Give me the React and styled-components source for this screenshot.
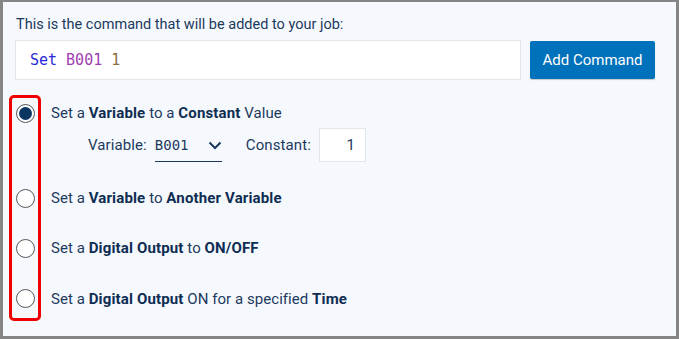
import React from "react";
import styled, { createGlobalStyle } from "styled-components";

const Global = createGlobalStyle`
  html, body { margin: 0; padding: 0; }
  body { font-family: Roboto, "Liberation Sans", sans-serif; }
  * { box-sizing: border-box; }
`;

const Frame = styled.div`
  width: 679px;
  height: 339px;
  border-style: solid;
  border-color: #858585;
  border-width: 2px 3px 3px 3px;
  background: #f5f9fd;
  padding: 14px 21px 0 12px;
  color: #1d3a5e;
`;

const Intro = styled.div`
  font-size: 14.5px;
  line-height: 18px;
  margin-left: 1px;
  margin-bottom: 6px;
`;

const CommandRow = styled.div`
  display: flex;
  align-items: center;
  gap: 9px;
`;

const CodeBox = styled.div`
  flex: 1;
  height: 40px;
  background: #fff;
  border: 1px solid #e3e6ea;
  display: flex;
  align-items: center;
  padding-left: 14px;
  font-family: "DejaVu Sans Mono", "Liberation Mono", monospace;
  font-size: 15px;
`;

const Tok = styled.span`
  color: ${(p) => p.$c};
  margin-right: 9px;
`;

const Button = styled.button`
  width: 125px;
  height: 38px;
  border: none;
  border-radius: 2px;
  background: #0071bb;
  color: #fff;
  font-family: Roboto, "Liberation Sans", sans-serif;
  font-size: 15px;
  box-shadow: 0 1px 1px rgba(0, 0, 0, 0.2);
`;

const Options = styled.div`
  position: relative;
  margin-top: 15px;
  display: flex;
  flex-direction: column;
`;

const Highlight = styled.div`
  position: absolute;
  left: -6px;
  top: 0;
  width: 32px;
  height: 226px;
  border: 3px solid #ee0000;
  border-radius: 5px;
  pointer-events: none;
`;

const Option = styled.label`
  display: flex;
  align-items: center;
  height: ${(p) => p.$h}px;
  font-size: 15px;
  letter-spacing: 0.05px;
  gap: 16px;
  padding-left: 1px;
`;

const Radio = styled.span`
  width: 19px;
  height: 19px;
  border-radius: 50%;
  border: 1.5px solid #555;
  background: #fff;
  display: flex;
  align-items: center;
  justify-content: center;
  flex: none;
  &::after {
    content: "";
    width: 13px;
    height: 13px;
    border-radius: 50%;
    background: #0a3560;
    display: ${(p) => (p.$on ? "block" : "none")};
  }
`;

const B = styled.b`
  font-weight: 700;
  color: #0f2d52;
  letter-spacing: 0.15px;
`;

const SubRow = styled.div`
  display: flex;
  align-items: center;
  height: 34px;
  margin-top: -3px;
  margin-bottom: 11px;
  padding-left: 73px;
  font-size: 15px;
  letter-spacing: 0.1px;
`;

const SubLabel = styled.span`
  margin-right: 8px;
`;

const Select = styled.div`
  width: 67px;
  height: 34px;
  border-bottom: 1px solid #1d3a5e;
  display: flex;
  align-items: center;
  justify-content: space-between;
  font-family: "DejaVu Sans Mono", "Liberation Mono", monospace;
  font-size: 14px;
  letter-spacing: 0;
  margin-right: 24px;
  padding-top: 1px;
`;

const NumBox = styled.div`
  width: 47px;
  height: 34px;
  background: #fff;
  border: 1px solid #e3e6ea;
  display: flex;
  align-items: center;
  justify-content: flex-end;
  padding-right: 10px;
  font-size: 15px;
  margin-left: 8px;
`;

export default function App() {
  return (
    <>
      <Global />
      <Frame>
        <Intro>This is the command that will be added to your job:</Intro>
        <CommandRow>
          <CodeBox>
            <Tok $c="#2a2ad6">Set</Tok>
            <Tok $c="#a23fb3">B001</Tok>
            <Tok $c="#8b6b3c">1</Tok>
          </CodeBox>
          <Button>Add Command</Button>
        </CommandRow>
        <Options>
          <Highlight />
          <Option $h={36}>
            <Radio $on />
            <span>
              Set a <B>Variable</B> to a <B>Constant</B> Value
            </span>
          </Option>
          <SubRow>
            <SubLabel>Variable:</SubLabel>
            <Select>
              <span>B001</span>
              <svg width="14" height="9" viewBox="0 0 14 9">
                <path d="M1.5 1.5 L7 7 L12.5 1.5" fill="none" stroke="#1d3a5e" strokeWidth="2" />
              </svg>
            </Select>
            <span>Constant:</span>
            <NumBox>1</NumBox>
          </SubRow>
          <Option $h={50}>
            <Radio />
            <span>
              Set a <B>Variable</B> to <B>Another Variable</B>
            </span>
          </Option>
          <Option $h={50}>
            <Radio />
            <span>
              Set a <B>Digital Output</B> to <B>ON/OFF</B>
            </span>
          </Option>
          <Option $h={51}>
            <Radio />
            <span>
              Set a <B>Digital Output</B> ON for a specified <B>Time</B>
            </span>
          </Option>
        </Options>
      </Frame>
    </>
  );
}
